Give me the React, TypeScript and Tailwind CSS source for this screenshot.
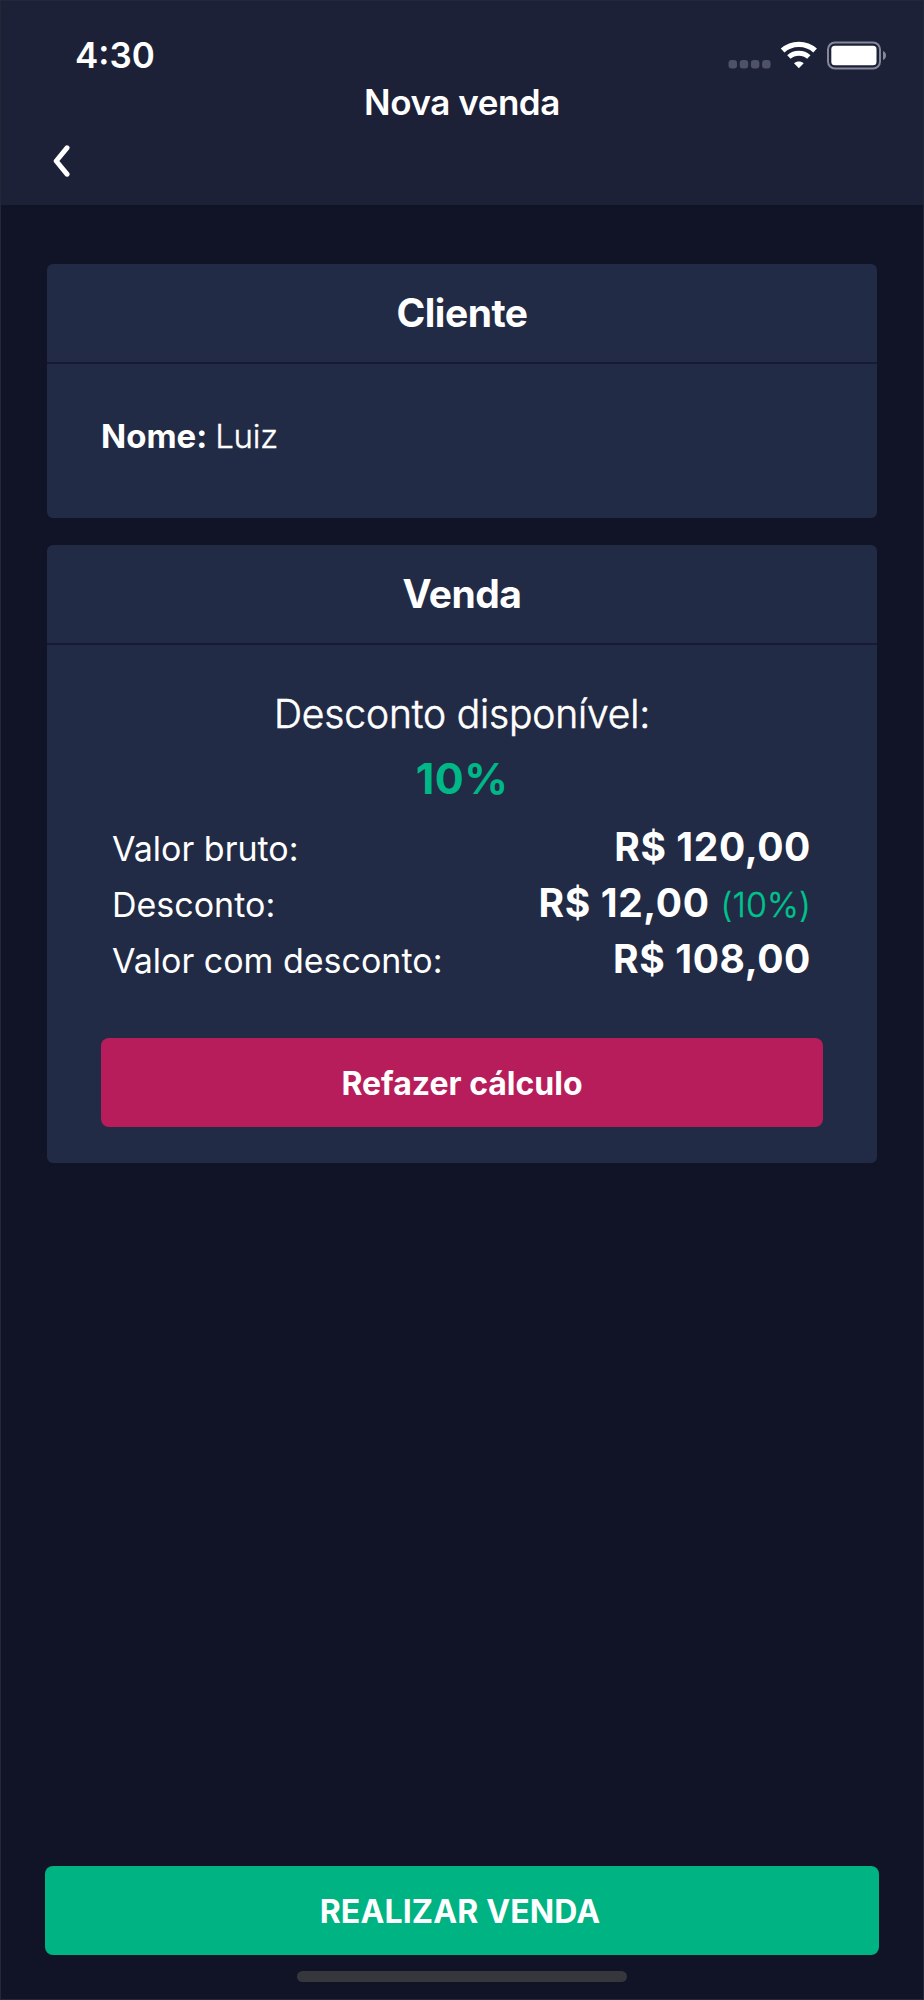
import React, { useState } from 'react';
import type { ReactNode } from 'react';

// Barra de estado del teléfono: hora, señal, wifi y batería
function StatusBar() {
    return (
        <div className="flex h-12 items-center justify-between pl-[75px] pr-[37px]">
            <span className="text-[35px] leading-[48px] font-semibold">4:30</span>
            <svg width="160" height="30" viewBox="0 0 160 30" fill="none">
                <g fill="#4e5167">
                    <rect x="1.5" y="20" width="8.5" height="8.5" rx="3" />
                    <rect x="12.7" y="20" width="8.5" height="8.5" rx="3" />
                    <rect x="23.9" y="20" width="8.5" height="8.5" rx="3" />
                    <rect x="35.1" y="20" width="8.5" height="8.5" rx="3" />
                </g>
                <g stroke="#fff">
                    <path d="M55.6 10.6C64.6 2.3 79.1 2.3 88.1 10.6" strokeWidth="5.4" />
                    <path d="M61.9 17C67.4 12 76.3 12 81.8 17" strokeWidth="5" />
                </g>
                <path d="M71.85 28.3L67 23.2C69.7 20.9 74 20.9 76.7 23.2Z" fill="#fff" />
                <rect x="101" y="2.5" width="52" height="26" rx="7" stroke="#85889a" strokeWidth="2" />
                <rect x="104.3" y="5.7" width="45.2" height="19.6" rx="3.5" fill="#fff" />
                <path d="M156 11C160 12.5 160 18.5 156 20Z" fill="#85889a" />
            </svg>
        </div>
    );
}

function Header() {
    return (
        <header className="h-[205px] bg-[#1d2138] pt-[31px]">
            <StatusBar />
            <h1 className="text-center text-[35px] leading-[47px] font-semibold tracking-[-0.45px]">Nova venda</h1>
            <button className="mt-[19px] ml-[53px] block">
                <svg width="17" height="32" viewBox="0 0 17 32" fill="none">
                    <path d="M14 2.8L3.2 16L14 29.2" stroke="#fff" strokeWidth="5" strokeLinecap="round" strokeLinejoin="round" />
                </svg>
            </button>
        </header>
    );
}

function Card({ title, children }: { title: string, children: ReactNode }) {
    return (
        <section className="rounded-md bg-[#222b45]">
            <h2 className="h-[100px] border-b-2 border-[#161a33] text-center text-[39px] leading-[97px] font-bold tracking-[-0.5px]">{title}</h2>
            {children}
        </section>
    );
}

function Row({ label, value, extra }: { label: string, value: string, extra?: string }) {
    return (
        <div className="flex h-14 items-baseline justify-between leading-[56px]">
            <span className="text-[34px]">{label}</span>
            <span className="text-[39px] font-bold tracking-[0.6px]">
                {value}
                {extra && <span className="ml-[11px] text-[34px] font-light tracking-[0.1px] text-[#00c48c] [-webkit-text-stroke:0.4px]">{extra}</span>}
            </span>
        </div>
    );
}

export default function App() {
    const [discount] = useState(10);

    return (
        <div className="flex h-[2000px] w-[924px] flex-col bg-[#101426] font-['Inter',sans-serif] text-white outline-1 -outline-offset-1 outline-[#232839]">
            <Header />

            <main className="flex flex-1 flex-col gap-[27px] px-[47px] pt-[59px]">
                <Card title="Cliente">
                    <p className="h-[154px] px-[54px] pt-11 text-[33px] leading-[56px] font-light tracking-[-0.2px]">
                        <strong className="font-bold tracking-normal">Nome:</strong>
                        <span className="ml-2 [-webkit-text-stroke:0.4px]">Luiz</span>
                    </p>
                </Card>

                <Card title="Venda">
                    <div className="px-[54px] pt-10 pb-9">
                        <p className="text-center text-[39px] leading-[58px] font-light tracking-[-0.15px] [-webkit-text-stroke:0.6px]">Desconto disponível:</p>
                        <p className="text-center text-[43px] leading-[70px] font-bold tracking-[0.5px] text-[#00b887]">{discount}%</p>
                        <div className="mt-[6px] pr-3 pl-[11px]">
                            <Row label="Valor bruto:" value="R$ 120,00" />
                            <Row label="Desconto:" value="R$ 12,00" extra={`(${discount}%)`} />
                            <Row label="Valor com desconto:" value="R$ 108,00" />
                        </div>
                        <button className="mt-[51px] block h-[89px] w-full rounded-lg bg-[#b81d5b] pt-0.5 text-[32px] font-bold">
                            Refazer cálculo
                        </button>
                    </div>
                </Card>
            </main>

            <footer className="px-[45px] pb-[18px]">
                <button className="block h-[89px] w-full rounded-lg bg-[#00b383] pt-0.5 pr-1 text-[32px] font-bold tracking-[0.15px]">
                    REALIZAR VENDA
                </button>
                <div className="mx-auto mt-4 h-[11px] w-[330px] rounded-full bg-[#36373c]" />
            </footer>
        </div>
    );
}
